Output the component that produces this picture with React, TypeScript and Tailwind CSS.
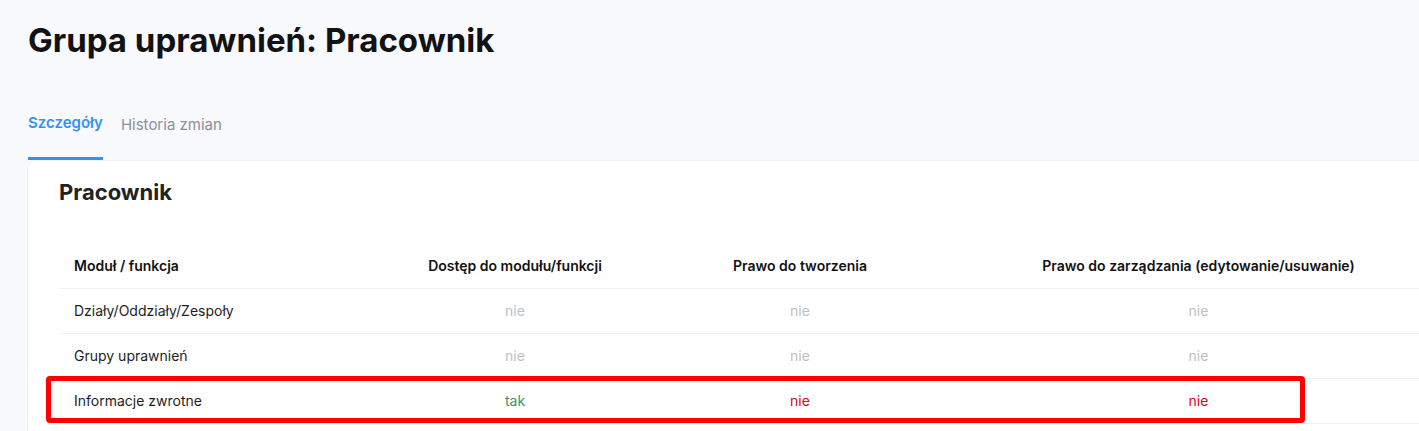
import React from "react";

const rows = [
  { name: "Działy/Oddziały/Zespoły", access: "nie", create: "nie", manage: "nie" },
  { name: "Grupy uprawnień", access: "nie", create: "nie", manage: "nie" },
  { name: "Informacje zwrotne", access: "tak", create: "nie", manage: "nie", marked: true },
];

const cellColor = (value: string, marked?: boolean) => {
  if (value === "tak") return "text-[#3a9468]";
  if (marked) return "text-[#e0001a]";
  return "text-[#bcc1c6]";
};

const App = () => {
  return (
    <div className="min-h-screen overflow-hidden bg-[#f8f9fd] pl-[28px] pt-[20px] font-['Inter',sans-serif] text-[#121212]">
      <h1 className="text-[33px] leading-[40px] font-bold">
        Grupa uprawnień: Pracownik
      </h1>

      <div className="mt-[53px] flex gap-[18px] text-[15px] leading-[20px]">
        <button className="border-b-[3px] border-[#3490f3] pb-[24px] font-semibold text-[#3490f3]">
          Szczegóły
        </button>
        <button className="pb-[24px] text-[#8c8f98]">Historia zmian</button>
      </div>

      <div className="relative mt-px w-[1460px] rounded-tl-[8px] bg-white px-[31px] pt-[17px] pb-[20px] shadow-[0_0_0_1px_#f0f2f6]">
        <h2 className="text-[22px] leading-[28px] font-bold text-[#222]">Pracownik</h2>

        <table className="mt-[37px] w-full table-fixed text-[14px]">
          <colgroup>
            <col className="w-[311px]" />
            <col className="w-[290px]" />
            <col className="w-[280px]" />
            <col />
          </colgroup>
          <thead>
            <tr className="h-[45px] border-b border-[#eef1f5]">
              <th className="px-[15px] text-left font-semibold">Moduł / funkcja</th>
              <th className="font-semibold">Dostęp do modułu/funkcji</th>
              <th className="font-semibold">Prawo do tworzenia</th>
              <th className="font-semibold">Prawo do zarządzania (edytowanie/usuwanie)</th>
            </tr>
          </thead>
          <tbody>
            {rows.map((row) => (
              <tr key={row.name} className="h-[45px] border-b border-[#eef1f5]">
                <td className="px-[15px] text-[#1e1e1e]">{row.name}</td>
                <td className={`text-center ${cellColor(row.access, row.marked)}`}>{row.access}</td>
                <td className={`text-center ${cellColor(row.create, row.marked)}`}>{row.create}</td>
                <td className={`text-center ${cellColor(row.manage, row.marked)}`}>{row.manage}</td>
              </tr>
            ))}
          </tbody>
        </table>

        {/* annotation frame around the highlighted row */}
        <div className="pointer-events-none absolute left-[18px] top-[215px] h-[47px] w-[1259px] rounded-[4px] border-[5px] border-[#ff0000]" />
      </div>
    </div>
  );
};

export default App;
